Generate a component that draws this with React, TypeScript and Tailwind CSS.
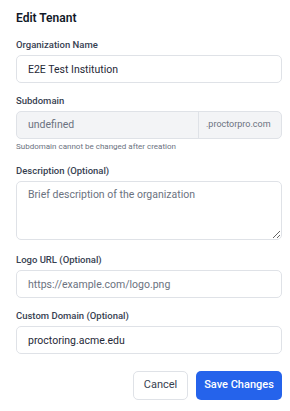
import { useState } from "react";

export default function App() {
  const [name, setName] = useState("E2E Test Institution");
  const [logo, setLogo] = useState("");
  const [domain, setDomain] = useState("proctoring.acme.edu");
  const [desc, setDesc] = useState("");

  const inputCls =
    "h-[28px] w-full rounded-[5px] border border-[#dfe2e7] bg-white px-[11px] text-[10.5px] text-[#1f2937] placeholder:text-[#6b7280] outline-none";
  const labelCls = "block text-[9.5px] leading-[14px] font-medium text-[#374151] mb-[3px]";

  return (
    <div
      className="min-h-screen w-[290px] bg-white pl-4 pr-2 pt-[9px]"
      style={{ fontFamily: 'Roboto, "Noto Sans", sans-serif' }}
    >
      <h2 className="text-[12px] leading-[18px] font-semibold text-[#111827]">Edit Tenant</h2>

      <div className="mt-[11px]">
        <label className={labelCls}>Organization Name</label>
        <input className={inputCls} value={name} onChange={(e) => setName(e.target.value)} />
      </div>

      <div className="mt-[11px]">
        <label className={labelCls}>Subdomain</label>
        <div className="flex h-[28px] w-full rounded-[5px] border border-[#dfe2e7] bg-[#f3f4f6] overflow-hidden">
          <input
            className="flex-1 min-w-0 bg-transparent px-[11px] text-[10.5px] text-[#6b7280] outline-none"
            value="undefined"
            disabled
          />
          <span className="flex w-[83px] items-center border-l border-[#dfe2e7] pl-[7px] text-[9px] text-[#6b7280]">
            .proctorpro.com
          </span>
        </div>
        <p className="mt-[2px] text-[8px] leading-[12px] text-[#6b7280]">
          Subdomain cannot be changed after creation
        </p>
      </div>

      <div className="mt-[11px]">
        <label className={labelCls}>Description (Optional)</label>
        <textarea
          className="block h-[59px] w-full rounded-[5px] border border-[#dfe2e7] bg-white px-[11px] py-[4px] text-[10.5px] leading-[17px] text-[#1f2937] placeholder:text-[#6b7280] outline-none"
          placeholder="Brief description of the organization"
          value={desc}
          onChange={(e) => setDesc(e.target.value)}
        />
      </div>

      <div className="mt-[13px]">
        <label className={labelCls}>Logo URL (Optional)</label>
        <input
          className={inputCls}
          placeholder="https://example.com/logo.png"
          value={logo}
          onChange={(e) => setLogo(e.target.value)}
        />
      </div>

      <div className="mt-[11px]">
        <label className={labelCls}>Custom Domain (Optional)</label>
        <input className={inputCls} value={domain} onChange={(e) => setDomain(e.target.value)} />
      </div>

      <div className="mt-[17px] flex justify-end gap-[8px]">
        <button className="h-[29px] w-[55px] rounded-[5px] border border-[#dfe2e7] bg-white text-[11px] text-[#374151]">
          Cancel
        </button>
        <button className="h-[29px] w-[86px] rounded-[5px] bg-[#2563eb] text-[11px] font-medium text-white">
          Save Changes
        </button>
      </div>
    </div>
  );
}
